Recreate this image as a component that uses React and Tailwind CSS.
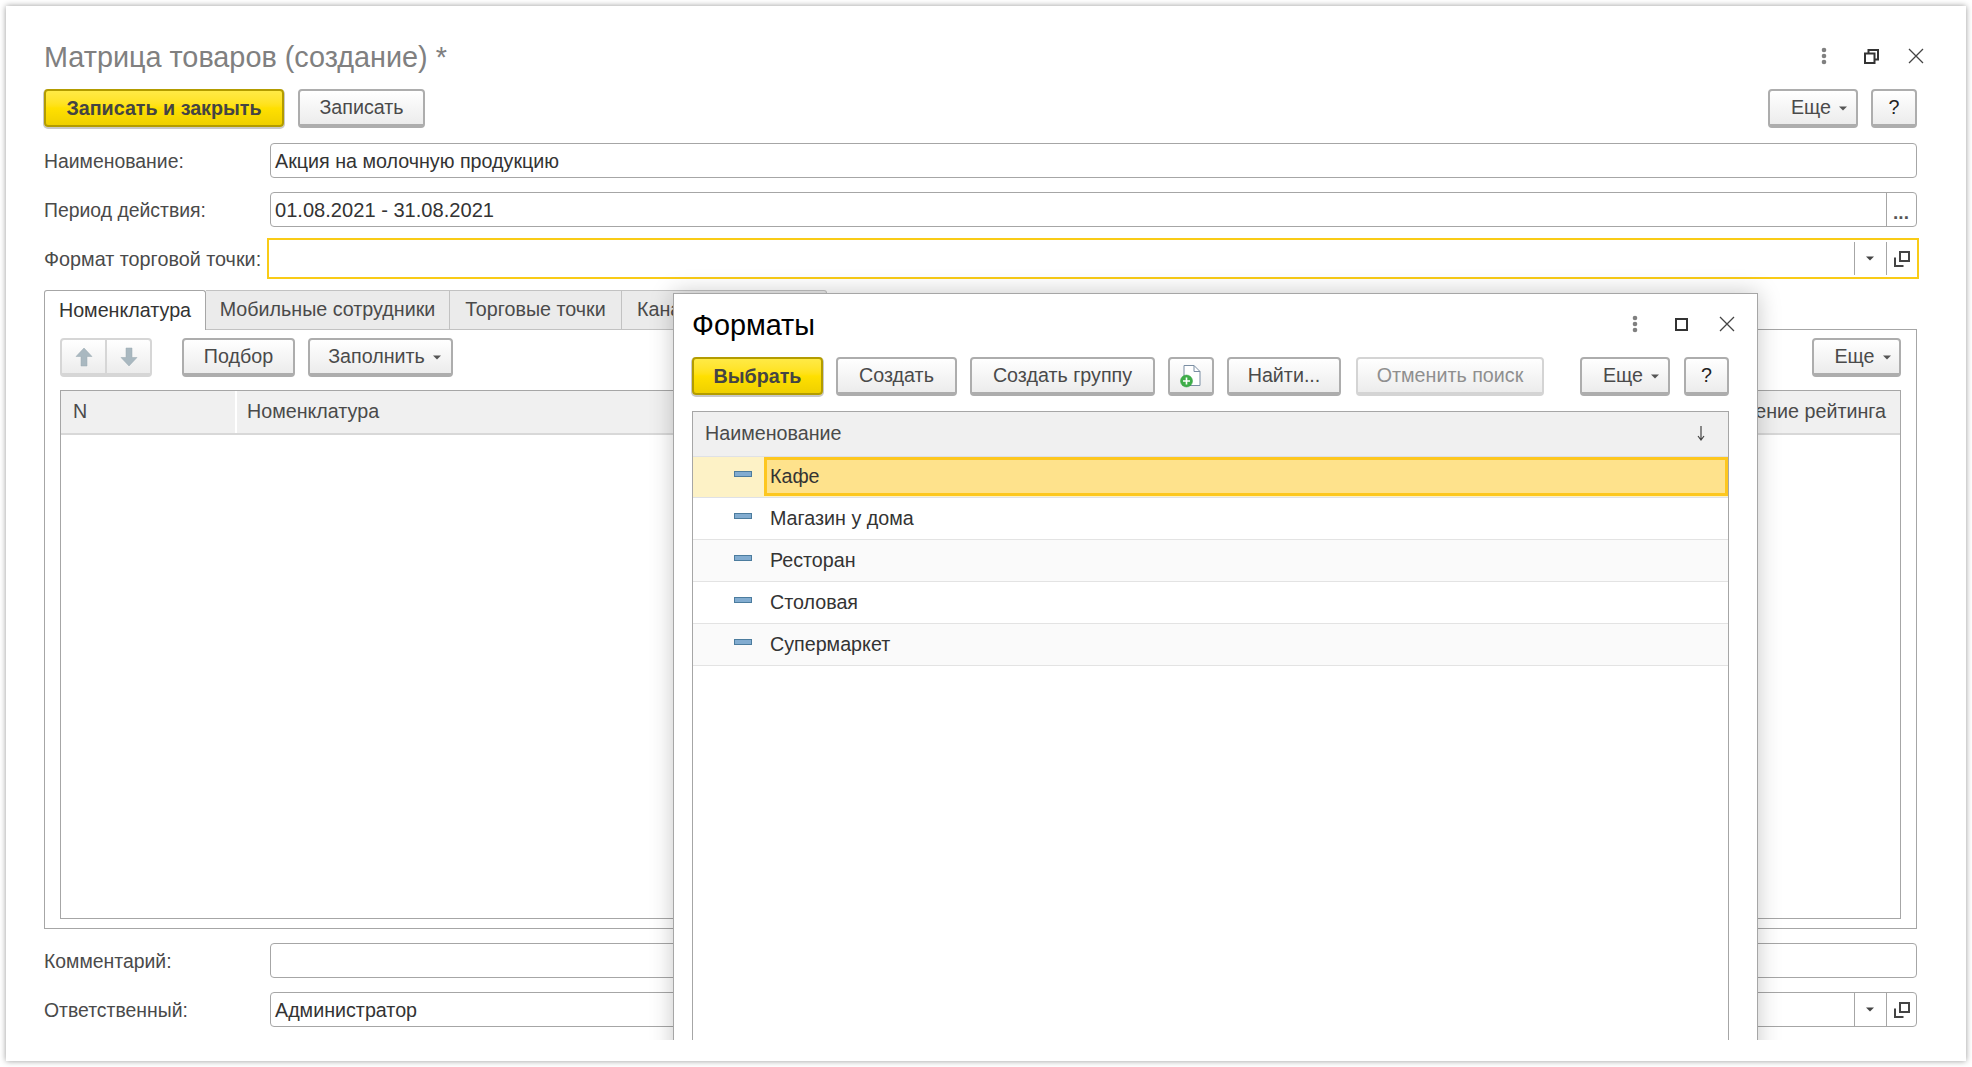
import React from "react"

const font = { fontFamily: '"Liberation Sans", Arial, sans-serif' }

const Dots = () => (
  <svg width="8" height="18" viewBox="0 0 8 18" className="block">
    <circle cx="4" cy="3" r="2.3" fill="#808080" />
    <circle cx="4" cy="9" r="2.3" fill="#808080" />
    <circle cx="4" cy="15" r="2.3" fill="#808080" />
  </svg>
)

const Close = ({ size = 16 }) => (
  <svg width={size} height={size} viewBox="0 0 16 16" className="block">
    <path d="M1 1L15 15M15 1L1 15" stroke="#444" strokeWidth="1.3" fill="none" />
  </svg>
)

const Restore = () => (
  <svg width="15" height="15" viewBox="0 0 15 15" className="block">
    <path d="M4.5 4V1h9.5v9.5h-3.5" stroke="#333" strokeWidth="2" fill="none" />
    <rect x="1" y="4.5" width="9.5" height="9.5" stroke="#333" strokeWidth="2" fill="none" />
  </svg>
)

const Maximize = () => (
  <svg width="13" height="13" viewBox="0 0 13 13" className="block">
    <rect x="1" y="1" width="11" height="11" stroke="#333" strokeWidth="2" fill="none" />
  </svg>
)

const Caret = ({ color = "#555" }) => (
  <svg width="8" height="5" viewBox="0 0 8 5" className="block">
    <path d="M0 0.500h8L4 4.500z" fill={color} />
  </svg>
)

const OpenIcon = () => (
  <svg width="16" height="16" viewBox="0 0 16 16" className="block">
    <path d="M1 6.500V15h8.500" stroke="#444" strokeWidth="2" fill="none" />
    <rect x="6" y="1" width="9" height="9" stroke="#444" strokeWidth="2" fill="none" />
  </svg>
)

const Arrow = ({ down }) => (
  <svg width="18" height="20" viewBox="0 0 18 20" className={down ? "block rotate-180" : "block"}>
    <path d="M9 1L17 9.500H12V19H6V9.500H1z" fill="#a9b8c0" stroke="#98a8b0" strokeWidth="0.5" />
  </svg>
)

const NewDocIcon = () => (
  <svg width="22" height="24" viewBox="0 0 22 24" className="block">
    <path d="M4 1.500H14L20 7.500V21.500H4z" fill="#fff" stroke="#7b8ea3" strokeWidth="1" />
    <path d="M14 1.500V7.500H20" fill="none" stroke="#7b8ea3" strokeWidth="1" />
    <circle cx="6.500" cy="17" r="6" fill="#3fae49" stroke="#2b9a3a" strokeWidth="0.5" />
    <path d="M6.500 13.500V20.500M3 17H10" stroke="#fff" strokeWidth="1.600" />
  </svg>
)

const Btn = ({ children, className = "" }) => (
  <button className={`h-[39px] shrink-0 rounded-[4px] border-2 border-b-[4px] border-[#adadad] bg-linear-to-b from-white to-[#ececec] pt-px text-[19.7px] leading-none text-[#4a4a4a] flex items-center justify-center ${className}`}>
    {children}
  </button>
)

const YellowBtn = ({ children, className = "" }) => (
  <button className={`h-[38px] shrink-0 rounded-[4px] border-2 border-[#b39c00] bg-linear-to-b from-[#ffea45] via-[#ffe000] to-[#efd000] shadow-[0_1px_0_1px_#c9c9c9] pt-px text-[19.7px] font-bold leading-none text-[#444] flex items-center justify-center ${className}`}>
    {children}
  </button>
)

const MoreBtn = ({ className = "" }) => (
  <Btn className={`gap-2 pl-3 ${className}`}>
    <span>Еще</span>
    <Caret />
  </Btn>
)

const Field = ({ label, value, after }) => (
  <div className="flex items-center h-[35px]">
    <div className="w-[226px] shrink-0 pt-[2px] text-[19.4px] text-[#4a4a4a]">{label}</div>
    <div className="flex-1 h-full flex border border-[#a6a6a6] rounded-[4px] bg-white">
      <div className="flex-1 pl-[4px] pt-[2px] flex items-center text-[19.7px] text-[#333]">{value}</div>
      {after}
    </div>
  </div>
)

const SideCell = ({ children, wide }) => (
  <div className={`${wide ? "w-[32px] pr-px" : "w-[30px]"} shrink-0 border-l border-[#a6a6a6] flex items-center justify-center`}>{children}</div>
)

const formats = ["Магазин у дома", "Ресторан", "Столовая", "Супермаркет"]

const Dash = () => (
  <div className="w-[18px] h-[6px] bg-[#82acd0] border border-[#4c7c9e] mr-[18px] -mt-[6px] shrink-0"></div>
)

const Dialog = () => (
  <div className="absolute z-20 left-[643px] top-[263px] w-[1145px] h-[777px] overflow-hidden pt-[30px] px-[30px]">
    <div className="w-[1085px] h-[800px] bg-white border border-[#a6a6a6] shadow-[0_0_22px_rgba(0,0,0,0.22)] pl-[18px] pr-[28px]">
      <div className="h-[63px] flex items-start justify-between">
        <div className="text-[28.8px] leading-[34px] pt-[14px] text-black">Форматы</div>
        <div className="flex items-center pt-[21px] -mr-[6px]">
          <Dots />
          <div className="ml-[36px]"><Maximize /></div>
          <div className="ml-[31px]"><Close /></div>
        </div>
      </div>
      <div className="flex items-start">
        <YellowBtn className="w-[131px] mr-[13px]">Выбрать</YellowBtn>
        <Btn className="w-[121px] mr-[13px]">Создать</Btn>
        <Btn className="w-[185px] mr-[13px]">Создать группу</Btn>
        <Btn className="w-[46px] mr-[13px]"><NewDocIcon /></Btn>
        <Btn className="w-[114px] mr-[15px]">Найти...</Btn>
        <Btn className="w-[188px] mr-[36px] border-[#d4d4d4] text-[#8f8f8f]">Отменить поиск</Btn>
        <MoreBtn className="w-[90px] mr-[14px]" />
        <Btn className="w-[45px] text-[#222]">?</Btn>
      </div>
      <div className="mt-[15px] h-[700px] border-l border-r border-t border-[#a6a6a6]">
        <div className="h-[44px] pb-px bg-[#f0f0f0] flex items-center justify-between pl-[12px] pr-[22px] text-[19.7px] text-[#4a4a4a]">
          <span>Наименование</span>
          <svg width="10" height="15" viewBox="0 0 10 15" className="block">
            <path d="M5 0V13M2 10L5 14L8 10" fill="none" stroke="#444" strokeWidth="1.200" />
          </svg>
        </div>
        <div className="h-[42px] border-t border-b border-[#dfe1e6] bg-[#fdf2c6] flex items-stretch">
          <div className="w-[71px] shrink-0 flex items-center justify-start pl-[41px]">
            <Dash />
          </div>
          <div className="flex-1 mb-px border-[3px] border-[#fdc71f] bg-[#fee28c] flex items-center pl-[3px] text-[19.7px] text-[#333]">Кафе</div>
        </div>
        {formats.map((name, i) => (
          <div key={name} className={`h-[42px] border-b border-[#e3e3e3] flex items-center pl-[41px] text-[19.7px] text-[#333] ${i % 2 === 1 ? "bg-[#fafafa]" : "bg-white"}`}>
            <Dash />
            <span>{name}</span>
          </div>
        ))}
      </div>
    </div>
  </div>
)

const App = () => {
  return (
    <div className="relative w-[1972px] h-[1067px] bg-white overflow-hidden" style={font}>
      <div className="ml-[6px] mt-[6px] w-[1960px] h-[1055px] bg-white shadow-[0_0_6px_rgba(0,0,0,0.4)] pl-[38px] pr-[49px]">
        {/* Title */}
        <div className="h-[83px] pt-[33px] flex items-start justify-between">
          <div className="text-[28.8px] leading-[36px] text-[#808080]">Матрица товаров (создание) *</div>
          <div className="flex items-center pt-[8px] -mr-[7px]">
            <Dots />
            <div className="ml-[36px]"><Restore /></div>
            <div className="ml-[29px]"><Close /></div>
          </div>
        </div>

        {/* Command bar */}
        <div className="flex items-start h-[39px] mb-[15px]">
          <YellowBtn className="w-[240px] mr-[14px]">Записать и закрыть</YellowBtn>
          <Btn className="w-[127px]">Записать</Btn>
          <div className="flex-1"></div>
          <MoreBtn className="w-[90px] mr-[13px]" />
          <Btn className="w-[46px] text-[#222]">?</Btn>
        </div>

        <Field label="Наименование:" value="Акция на молочную продукцию" />
        <div className="mt-[14px]">
          <Field
            label="Период действия:"
            value={<span className="text-[20.1px]">01.08.2021 - 31.08.2021</span>}
            after={<SideCell><span className="text-[19px] font-bold text-[#555] leading-none pt-[6px] pr-px">...</span></SideCell>}
          />
        </div>

        {/* Focused field */}
        <div className="mt-[11px] flex items-center h-[41px] -mr-[2px]">
          <div className="w-[223px] shrink-0 pt-[2px] text-[19.8px] text-[#4a4a4a]">Формат торговой точки:</div>
          <div className="flex-1 h-full flex border-2 border-[#f9cb16] bg-white py-[2px]">
            <div className="flex-1"></div>
            <SideCell wide><Caret color="#444" /></SideCell>
            <div className="w-[31px] shrink-0 border-l border-[#a6a6a6] flex items-center justify-center"><OpenIcon /></div>
          </div>
        </div>

        {/* Tabs */}
        <div className="mt-[11px] flex h-[40px] relative z-10 -mb-px">
          <div className="w-[162px] border border-b-0 border-[#a6a6a6] rounded-t-[3px] bg-white flex items-center justify-center text-[19.7px] text-[#333]">Номенклатура</div>
          <div className="w-[244px] border-t border-r border-b border-[#c2c2c2] bg-[#ebebeb] flex items-center justify-center text-[19.7px] text-[#4a4a4a]">Мобильные сотрудники</div>
          <div className="w-[172px] border-t border-r border-b border-[#c2c2c2] bg-[#ebebeb] flex items-center justify-center text-[19.7px] text-[#4a4a4a]">Торговые точки</div>
          <div className="w-[205px] border-t border-r border-b border-[#c2c2c2] rounded-tr-[3px] bg-[#ebebeb] flex items-center pl-[15px] text-[19.7px] text-[#4a4a4a]">Каналы сбыта</div>
        </div>

        {/* Tab panel */}
        <div className="h-[600px] border border-[#a6a6a6] px-[15px] pt-[8px] pb-[9px] flex flex-col">
          <div className="flex items-start h-[39px] mb-[13px]">
            <div className="w-[92px] h-[39px] shrink-0 mr-[30px] flex rounded-[4px] border-2 border-b-[4px] border-[#d6d6d6] bg-linear-to-b from-white to-[#ececec]">
              <div className="flex-1 border-r-2 border-[#d6d6d6] flex items-center justify-center"><Arrow /></div>
              <div className="flex-1 flex items-center justify-center"><Arrow down /></div>
            </div>
            <Btn className="w-[113px] mr-[13px]">Подбор</Btn>
            <Btn className="w-[145px] gap-2 pl-2">
              <span>Заполнить</span>
              <Caret />
            </Btn>
            <div className="flex-1"></div>
            <MoreBtn className="w-[89px]" />
          </div>
          <div className="flex-1 border border-[#a6a6a6]">
            <div className="h-[44px] bg-[#f0f0f0] border-b-2 border-[#d8d8d8] flex items-center text-[19.7px] text-[#4a4a4a]">
              <div className="w-[176px] h-full border-r-2 border-white pl-[12px] flex items-center">N</div>
              <div className="pl-[10px]">Номенклатура</div>
              <div className="ml-auto pr-[14px]">Значение рейтинга</div>
            </div>
          </div>
        </div>

        <div className="mt-[14px]">
          <Field label="Комментарий:" value="" />
        </div>
        <div className="mt-[14px]">
          <Field
            label="Ответственный:"
            value="Администратор"
            after={
              <>
                <SideCell wide><Caret color="#444" /></SideCell>
                <SideCell><OpenIcon /></SideCell>
              </>
            }
          />
        </div>
      </div>
      <Dialog />
    </div>
  )
}

export default App
